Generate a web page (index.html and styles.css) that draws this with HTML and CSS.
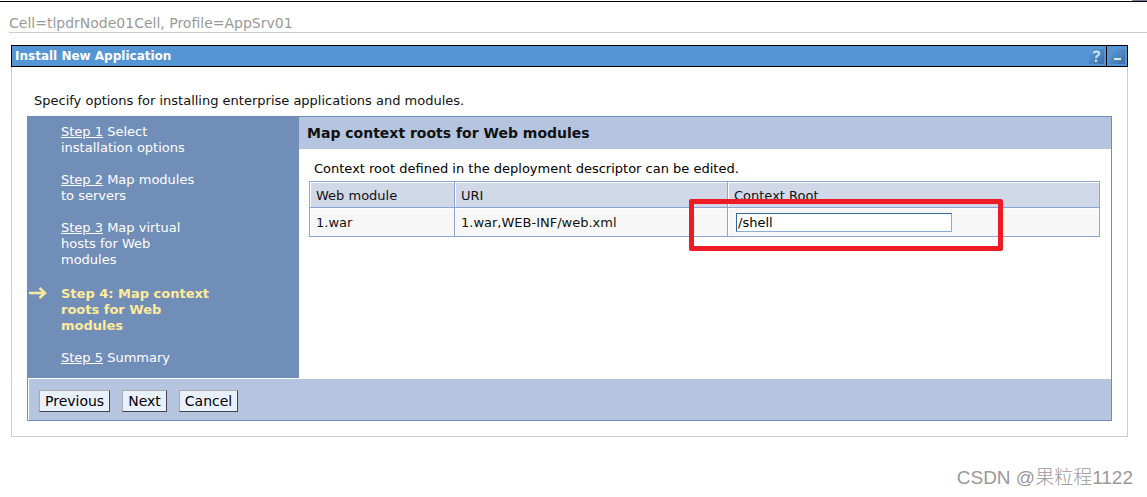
FILE: index.html
```html
<!DOCTYPE html>
<html lang="en">
<head>
<meta charset="utf-8">
<title>Install New Application</title>
<link rel="stylesheet" href="styles.css">
</head>
<body>
<div class="frame-edge"></div>
<header class="context">Cell=tlpdrNode01Cell, Profile=AppSrv01</header>
<main class="portlet">
  <div class="titlebar">
    <h1 class="title">Install New Application</h1>
    <button class="tool" type="button" aria-label="Help">
      <svg width="15" height="15" viewBox="0 0 15 15"><defs><linearGradient id="g" x1="0" y1="0" x2="1" y2="1"><stop offset="0" stop-color="#5c9bd9"/><stop offset="1" stop-color="#3c70a8"/></linearGradient></defs><rect width="15" height="15" fill="url(#g)"/><path d="M4.5 4.2C5.2 1.9 10.2 2 10.2 4.6C10.2 6.8 7.2 6.6 7 9M7 10.5V13" fill="none" stroke="#c8e0f5" stroke-width="2.2"/></svg>
    </button>
    <button class="tool tool-min" type="button" aria-label="Minimize">
      <svg width="15" height="15" viewBox="0 0 15 15"><rect width="15" height="15" fill="url(#g)"/><path d="M4 10H11" stroke="#d9ecfc" stroke-width="2"/></svg>
    </button>
  </div>
  <div class="portlet-body">
    <p class="intro">Specify options for installing enterprise applications and modules.</p>
    <form class="wizard">
      <div class="panes">
        <nav class="steps">
          <p class="step"><a href="#">Step 1</a> Select<br>installation options</p>
          <p class="step"><a href="#">Step 2</a> Map modules<br>to servers</p>
          <p class="step"><a href="#">Step 3</a> Map virtual<br>hosts for Web<br>modules</p>
          <p class="step current">
            <svg class="arrow" width="18" height="12" viewBox="0 0 18 12"><path d="M0 6H16M10.5 1L16 6L10.5 11" fill="none" stroke="#ffeb9a" stroke-width="2.4"/></svg>
            Step 4: Map context<br>roots for Web<br>modules</p>
          <p class="step"><a href="#">Step 5</a> Summary</p>
        </nav>
        <section class="content">
          <h2 class="heading">Map context roots for Web modules</h2>
          <div class="content-body">
            <p class="note">Context root defined in the deployment descriptor can be edited.</p>
            <div class="table-wrap">
              <table class="modules">
                <colgroup><col class="col-module"><col class="col-uri"><col></colgroup>
                <thead><tr><th scope="col">Web module</th><th scope="col">URI</th><th scope="col" id="root-label">Context Root</th></tr></thead>
                <tbody><tr><td>1.war</td><td>1.war,WEB-INF/web.xml</td><td class="field-cell"><input class="field" type="text" value="/shell" aria-labelledby="root-label"></td></tr></tbody>
              </table>
              <div class="highlight"></div>
            </div>
          </div>
        </section>
      </div>
      <div class="actions">
        <button class="btn" type="button">Previous</button>
        <button class="btn" type="button">Next</button>
        <button class="btn" type="button">Cancel</button>
      </div>
    </form>
  </div>
</main>
<footer class="credit">CSDN @果粒程1122</footer>
</body>
</html>
```
FILE: styles.css
```css
* { box-sizing: border-box; }
body {
  margin: 0;
  background: #fff;
  color: #111;
  font: 13px/16px Verdana, "DejaVu Sans", sans-serif;
}
h1, h2, p { margin: 0; }
.frame-edge {
  height: 2px;
  border-bottom: 1px solid #000;
  background: linear-gradient(#80779b, #80779b) right top / 15px 1px no-repeat;
}
.context {
  margin: 12px 0 12px 9px;
  border-bottom: 1px solid #ccc;
  color: #999;
  font-size: 14px;
  line-height: 18px;
}
.portlet { margin: 0 19px 0 11px; }
.titlebar {
  display: flex;
  height: 22px;
  border: 1px solid #000;
  background: #5495d5;
}
.title {
  flex: 1;
  padding-left: 3px;
  color: #fff;
  font-size: 12px;
  line-height: 21px;
}
.tool {
  display: flex;
  align-items: center;
  padding: 1px 2px 0;
  border: 0;
  background: none;
}
.tool-min { padding-left: 3px; border-left: 1px solid #000; }
.portlet-body {
  padding: 26px 15px 15px;
  border: 1px solid #ccc;
  border-top: 0;
}
.intro { padding: 0 7px 7px; }
.wizard { border: 1px solid #6f8db8; }
.panes { display: flex; }
.steps {
  display: flex;
  flex-direction: column;
  gap: 16px;
  width: 271px;
  padding: 7px 8px 12px 33px;
  background: #718eb9;
  color: #fff;
}
.steps a { color: inherit; }
.current {
  position: relative;
  padding-top: 2px;
  color: #ffeb9a;
  font-weight: bold;
}
.arrow { position: absolute; left: -32px; top: 3px; }
.content { flex: 1; }
.heading {
  padding: 0 8px;
  background: #b5c5df;
  font-size: 14px;
  line-height: 32px;
}
.content-body { padding: 12px 11px 0 10px; }
.note { padding: 0 5px 4px; color: #000; }
.table-wrap { position: relative; }
.modules {
  width: 100%;
  table-layout: fixed;
  border-collapse: collapse;
  border: 1px solid #8ba5d6;
}
.col-module { width: 145px; }
.col-uri { width: 273px; }
.modules th, .modules td {
  padding: 2px 6px 0;
  border: 1px solid #8ba5d6;
  box-shadow: inset 1px 1px #fff;
  text-align: left;
  font-weight: normal;
}
.modules th { height: 26px; background: #d1d8e8; }
.modules td { height: 29px; background: #f7f7f7; }
.modules .field-cell { padding: 0 8px; }
.field {
  display: block;
  width: 216px;
  height: 19px;
  padding: 0 1px;
  border: 1px solid;
  border-color: #336799 #8cabd0 #8cabd0 #336799;
  background: #fff;
  color: #000;
  font: inherit;
}
.highlight {
  position: absolute;
  left: 380px;
  top: 18px;
  width: 314px;
  height: 52px;
  border: 5px solid #ed1c24;
  border-radius: 2px;
}
.actions {
  display: flex;
  gap: 12px;
  padding: 11px 10px 8px;
  border-top: 1px solid #fff;
  border-left: 1px solid #fff;
  background: #b5c5df;
}
.btn {
  height: 22px;
  padding: 0 5px;
  border: 1px solid;
  border-color: #aaa #444 #444 #aaa;
  background: #e9f1ff;
  color: #000;
  font: 14px/18px Verdana, "DejaVu Sans", sans-serif;
}
.credit {
  padding: 27px 14px 0;
  color: #999;
  font: 300 19px/28px "Liberation Sans", "Noto Sans CJK SC", sans-serif;
  text-align: right;
}
```
